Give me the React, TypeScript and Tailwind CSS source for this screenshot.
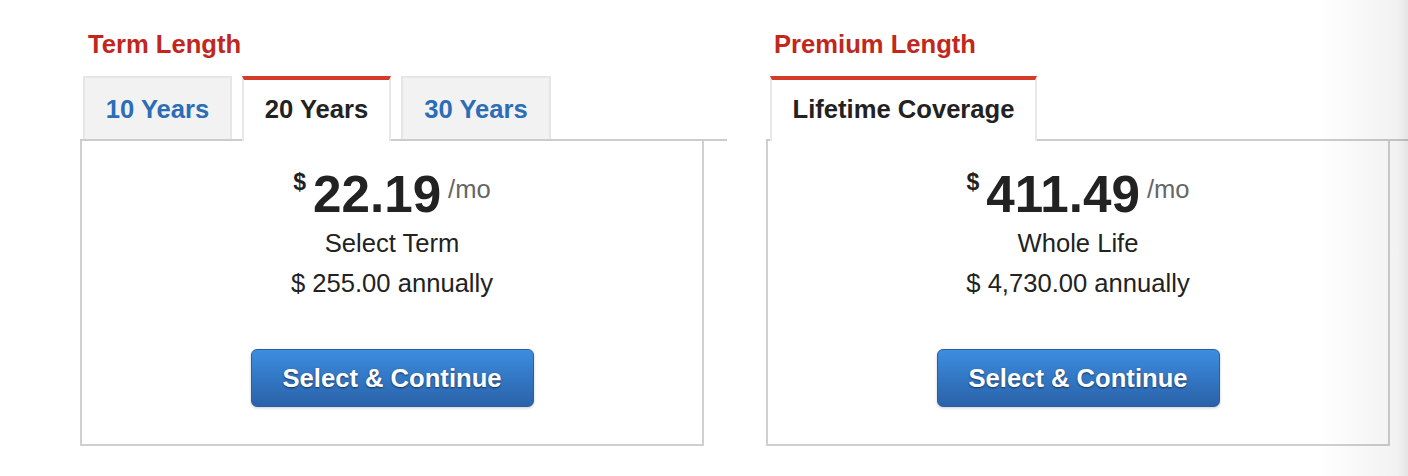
import React from "react";

type Tab = { label: string; active?: boolean; width: string };

type Plan = {
  title: string;
  tabs: Tab[];
  inset: string;
  price: string;
  name: string;
  annual: string;
};

const PLANS: Plan[] = [
  {
    title: "Term Length",
    inset: "pl-[3px]",
    tabs: [
      { label: "10 Years", width: "w-[149px]" },
      { label: "20 Years", active: true, width: "w-[149px]" },
      { label: "30 Years", width: "w-[150px]" },
    ],
    price: "22.19",
    name: "Select Term",
    annual: "$ 255.00 annually",
  },
  {
    title: "Premium Length",
    inset: "pl-[4px]",
    tabs: [{ label: "Lifetime Coverage", active: true, width: "w-[267px]" }],
    price: "411.49",
    name: "Whole Life",
    annual: "$ 4,730.00 annually",
  },
];

function TabButton({ tab }: { tab: Tab }) {
  if (tab.active) {
    return (
      <div
        className={`${tab.width} relative -mb-[2px] flex h-[65px] items-center justify-center border-x-2 border-t-4 border-x-[#e8e8e8] border-t-[#d53a2b] bg-white pb-[2px] text-[25.6px] font-bold text-[#222222]`}
      >
        {tab.label}
      </div>
    );
  }
  return (
    <div
      className={`${tab.width} flex h-[63px] items-center justify-center border-x-2 border-t-2 border-[#e6e6e6] bg-[#f2f2f2] pt-[2px] text-[25.6px] font-bold text-[#2c6db7]`}
    >
      {tab.label}
    </div>
  );
}

function PlanColumn({ plan }: { plan: Plan }) {
  return (
    <div className="w-[647px] shrink-0">
      <h2 className="pl-[8px] text-[25.6px] font-bold leading-[32px] text-[#c1271d]">
        {plan.title}
      </h2>

      {/* tabs */}
      <div className={`mt-[16px] flex items-end gap-[10px] border-b-2 border-[#cccccc] ${plan.inset}`}>
        {plan.tabs.map((t) => (
          <TabButton key={t.label} tab={t} />
        ))}
      </div>

      {/* panel */}
      <div className="flex h-[305px] w-[624px] flex-col items-center border-x-2 border-b-2 border-[#d0d0d0] pt-[26px] text-[#222222]">
        <div className="flex items-start">
          <span className="mt-[4px] mr-[7px] text-[23px] font-bold leading-[23px]">$</span>
          <span className="text-[51.2px] font-bold leading-[56px]">{plan.price}</span>
          <span className="mt-[9px] ml-[7px] text-[25.6px] leading-[26px] text-[#666666]">/mo</span>
        </div>
        <div className="text-[25.6px] leading-[40px]">{plan.name}</div>
        <div className="text-[25.6px] leading-[40px]">{plan.annual}</div>
        <button className="mt-[46px] flex h-[58px] w-[283px] items-center justify-center rounded-[6px] border border-[#2a5e9f] bg-gradient-to-b from-[#3c8de0] to-[#2a62a9] text-[25.6px] font-bold text-white shadow-[0_1px_3px_rgba(0,0,0,0.2)] [text-shadow:0_1px_2px_rgba(0,0,0,0.55)]">
          Select &amp; Continue
        </button>
      </div>
    </div>
  );
}

export default function App() {
  return (
    <div className="relative h-[476px] w-full overflow-hidden bg-white font-['Liberation_Sans',Arial,sans-serif]">
      <div className="flex gap-[39px] pl-[80px] pt-[28px]">
        {PLANS.map((p) => (
          <PlanColumn key={p.title} plan={p} />
        ))}
      </div>
      {/* page edge shading */}
      <div className="pointer-events-none absolute right-0 top-0 h-full w-[90px] bg-gradient-to-r from-transparent to-black/[0.06]" />
      <div className="pointer-events-none absolute right-0 top-0 h-full w-[10px] bg-gradient-to-r from-transparent to-black/[0.05]" />
    </div>
  );
}
